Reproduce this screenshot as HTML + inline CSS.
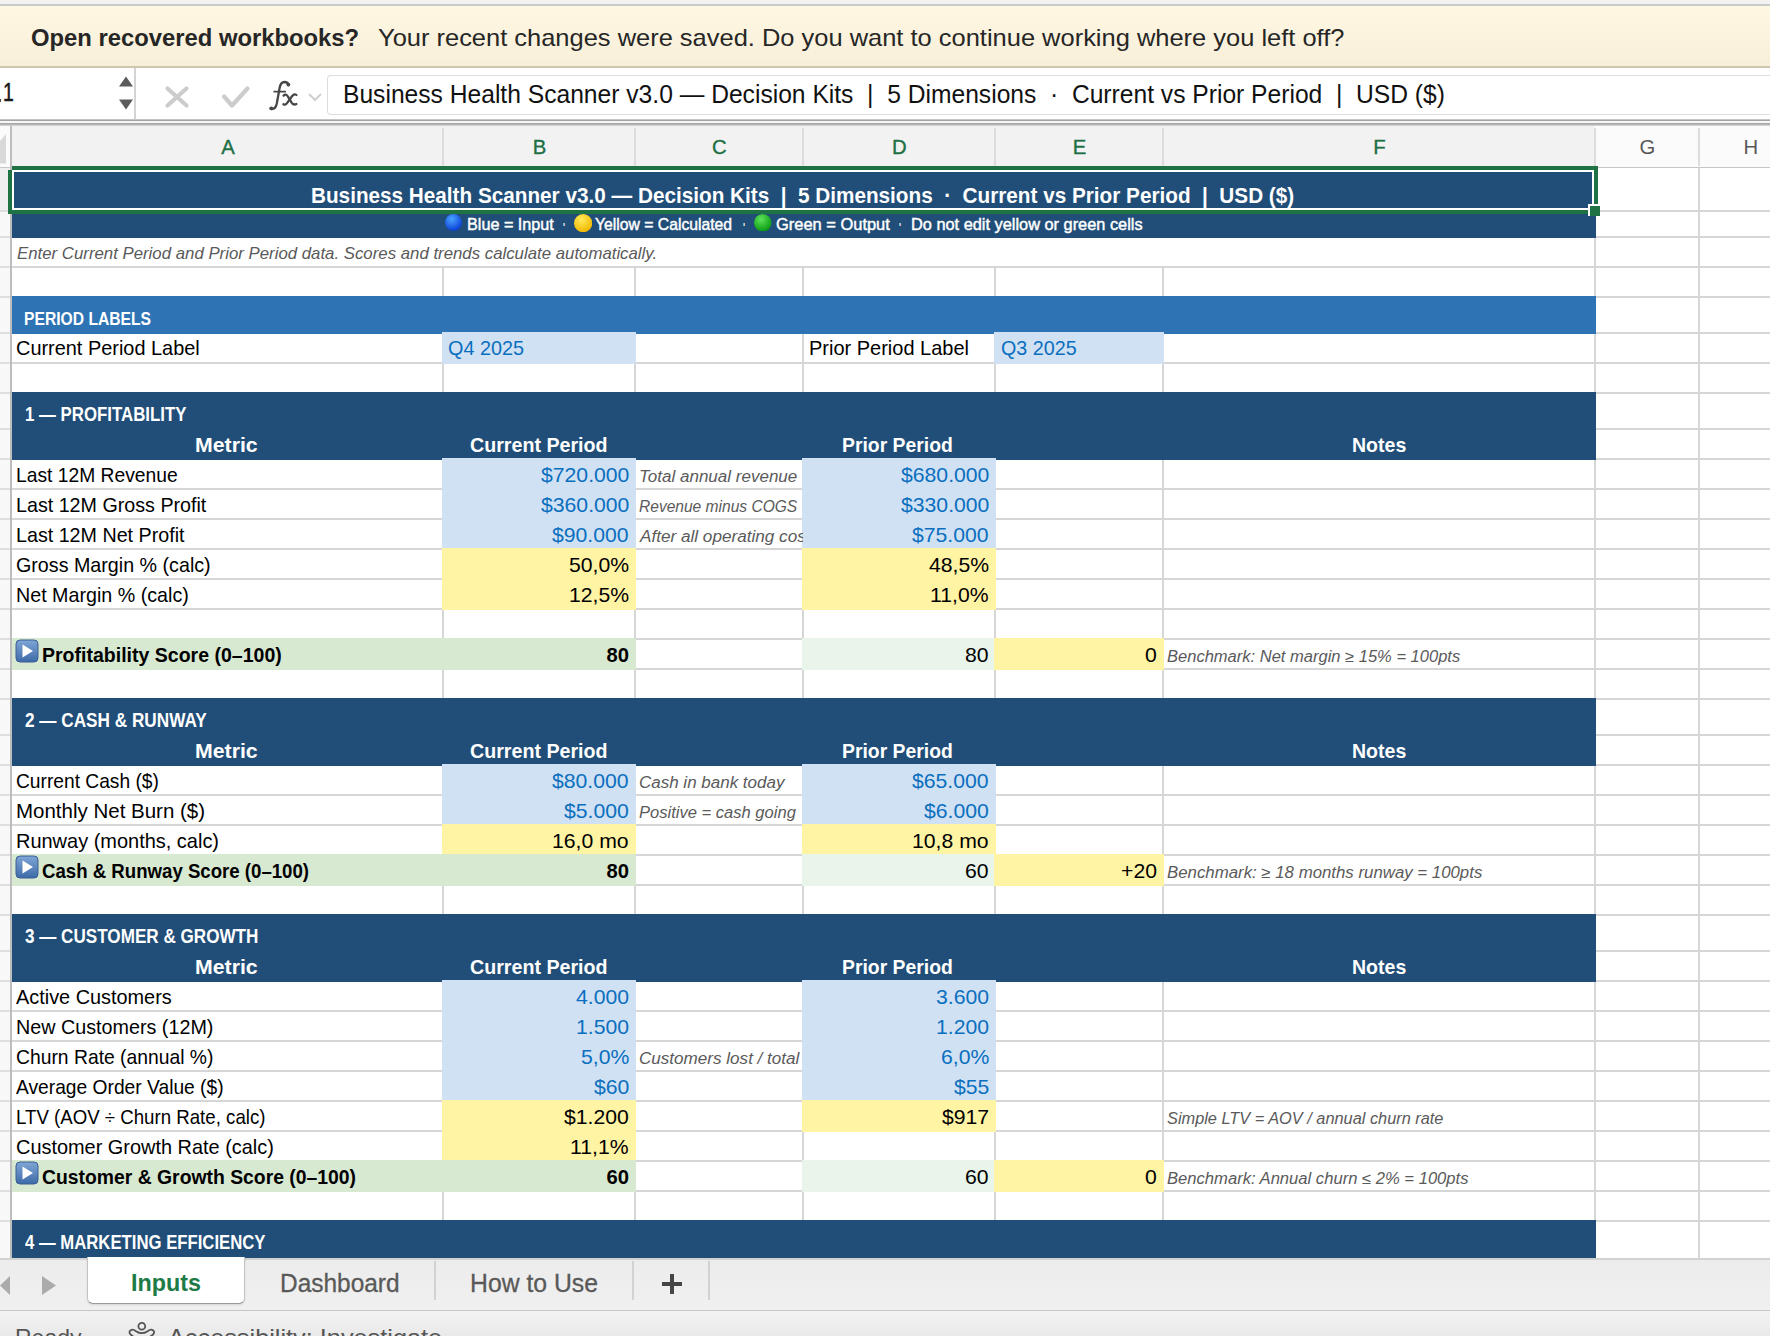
<!DOCTYPE html><html><head><meta charset="utf-8"><style>html,body{margin:0;padding:0;}body{width:1770px;height:1336px;overflow:hidden;position:relative;background:#fff;font-family:"Liberation Sans",sans-serif;}body>div,body>svg,div>div{position:absolute;}.t{white-space:pre;transform-origin:0 0;}svg{position:absolute;}</style></head><body>
<div style="left:0px;top:0px;width:1770px;height:4px;background:#f2f2f2;"></div>
<div style="left:0px;top:4px;width:1770px;height:2px;background:#c9c9c9;"></div>
<div style="left:0px;top:6px;width:1770px;height:60px;background:linear-gradient(#fef7e2,#f8efd9);"></div>
<div style="left:0px;top:66px;width:1770px;height:2px;background:#cfc6b2;"></div>
<div style="left:0px;top:68px;width:1770px;height:51px;background:#ffffff;"></div>
<div class="t" style="left:30.70px;top:25.68px;font-size:24px;line-height:24px;color:#262626;font-weight:700;font-style:normal;transform:scaleX(0.9920);">Open recovered workbooks?</div>
<div class="t" style="left:377.50px;top:25.68px;font-size:24px;line-height:24px;color:#262626;font-weight:400;font-style:normal;transform:scaleX(1.0606);">Your recent changes were saved. Do you want to continue working where you left off?</div>
<div style="left:134px;top:68px;width:2px;height:51px;background:#d4d4d4;"></div>
<div class="t" style="left:2.60px;top:80.21px;font-size:25.5px;line-height:25.5px;color:#1a1a1a;font-weight:400;font-style:normal;transform:scaleX(0.7649);-webkit-text-stroke:0.5px #1a1a1a;">1</div>
<div style="left:0px;top:99px;width:1px;height:3px;background:#444444;"></div>
<svg style="left:117px;top:74px" width="18" height="38" viewBox="0 0 18 38"><path d="M2 12.5 L9 2.5 L16 12.5 Z" fill="#5c5c5c"/><path d="M2 25.5 L9 35.5 L16 25.5 Z" fill="#5c5c5c"/></svg>
<svg style="left:160px;top:80px" width="100" height="34" viewBox="0 0 100 34"><path d="M7.5 8.5 L26.5 25.5 M26.5 8.5 L7.5 25.5" stroke="#cccccc" stroke-width="4.2" stroke-linecap="round"/><path d="M64 16.5 L72 25.5 L87.5 8.5" stroke="#cccccc" stroke-width="4.2" fill="none" stroke-linecap="round" stroke-linejoin="round"/></svg>
<svg style="left:260px;top:75px" width="45" height="40" viewBox="260 75 45 40"><g fill="none" stroke="#474747" stroke-width="2.3" stroke-linecap="round"><path d="M288.6 85 Q288 82 284.5 82 Q280.6 82.2 279.6 88 L276.8 103.5 Q275.6 109.2 271.6 109"/><path d="M274.2 91.6 L285.2 91.6" stroke-width="1.9"/><path d="M283.6 95.6 Q285.8 93.4 287.8 96.4 L291.6 102.6 Q293.6 105.6 296.4 104"/><path d="M296.4 95 Q294.4 93.2 292.2 96 L287.6 102.4 Q285.4 105.6 283.4 104.2"/></g><circle cx="288.3" cy="84.6" r="1.9" fill="#474747"/><circle cx="271.2" cy="108.3" r="1.9" fill="#474747"/></svg>
<svg style="left:306px;top:90px" width="18" height="14" viewBox="0 0 18 14"><path d="M3 4 L9 10 L15 4" stroke="#cfcfcf" stroke-width="2" fill="none"/></svg>
<div style="left:327px;top:75px;width:1443px;height:40px;background:#ffffff;box-sizing:border-box;border:1px solid #dedede;border-right:none;border-radius:4px 0 0 4px;"></div>
<div class="t" style="left:343.40px;top:81.81px;font-size:25.5px;line-height:25.5px;color:#111111;font-weight:400;font-style:normal;transform:scaleX(0.9655);">Business Health Scanner v3.0 — Decision Kits  |  5 Dimensions  ·  Current vs Prior Period  |  USD ($)</div>
<div style="left:0px;top:119px;width:1770px;height:1px;background:#c4c4c4;"></div>
<div style="left:0px;top:120px;width:1770px;height:1px;background:#a3a3a3;"></div>
<div style="left:0px;top:121px;width:1770px;height:2px;background:#f7f7f7;"></div>
<div style="left:0px;top:123px;width:1770px;height:1px;background:#a6a6a6;"></div>
<div style="left:0px;top:124px;width:1770px;height:1px;background:#b6b6b6;"></div>
<div style="left:0px;top:125px;width:1770px;height:1px;background:#d2d2d2;"></div>
<div style="left:0px;top:126px;width:1770px;height:42px;background:#fbfbfb;"></div>
<div style="left:12px;top:126px;width:1583px;height:40px;background:#f2f2f2;"></div>
<div style="left:0px;top:167px;width:1770px;height:2px;background:#c6c6c6;"></div>
<div style="left:442px;top:128px;width:2px;height:38px;background:#dcdcdc;"></div>
<div style="left:634px;top:128px;width:2px;height:38px;background:#dcdcdc;"></div>
<div style="left:802px;top:128px;width:2px;height:38px;background:#dcdcdc;"></div>
<div style="left:994px;top:128px;width:2px;height:38px;background:#dcdcdc;"></div>
<div style="left:1162px;top:128px;width:2px;height:38px;background:#dcdcdc;"></div>
<div style="left:1594px;top:128px;width:2px;height:38px;background:#dcdcdc;"></div>
<div style="left:1698px;top:128px;width:2px;height:38px;background:#dcdcdc;"></div>
<div style="left:10px;top:126px;width:2px;height:42px;background:#bdbdbd;"></div>
<svg style="left:0px;top:134px" width="8" height="30" viewBox="0 0 8 30"><path d="M0 29.6 L6 29.6 L6 0 L0 7 Z" fill="#d9d9d9"/></svg>
<div class="t" style="left:221.25px;top:136.52px;font-size:20.3px;line-height:20.3px;color:#1d7044;font-weight:400;font-style:normal;transform:scaleX(1.0000);-webkit-text-stroke:0.35px #1d7044;">A</div>
<div class="t" style="left:532.75px;top:136.52px;font-size:20.3px;line-height:20.3px;color:#1d7044;font-weight:400;font-style:normal;transform:scaleX(1.0000);-webkit-text-stroke:0.35px #1d7044;">B</div>
<div class="t" style="left:712.12px;top:136.52px;font-size:20.3px;line-height:20.3px;color:#1d7044;font-weight:400;font-style:normal;transform:scaleX(1.0000);-webkit-text-stroke:0.35px #1d7044;">C</div>
<div class="t" style="left:892.12px;top:136.52px;font-size:20.3px;line-height:20.3px;color:#1d7044;font-weight:400;font-style:normal;transform:scaleX(1.0000);-webkit-text-stroke:0.35px #1d7044;">D</div>
<div class="t" style="left:1072.75px;top:136.52px;font-size:20.3px;line-height:20.3px;color:#1d7044;font-weight:400;font-style:normal;transform:scaleX(1.0000);-webkit-text-stroke:0.35px #1d7044;">E</div>
<div class="t" style="left:1373.25px;top:136.52px;font-size:20.3px;line-height:20.3px;color:#1d7044;font-weight:400;font-style:normal;transform:scaleX(1.0000);-webkit-text-stroke:0.35px #1d7044;">F</div>
<div class="t" style="left:1639.62px;top:136.52px;font-size:20.3px;line-height:20.3px;color:#595959;font-weight:400;font-style:normal;transform:scaleX(1.0000);">G</div>
<div class="t" style="left:1743.62px;top:136.52px;font-size:20.3px;line-height:20.3px;color:#595959;font-weight:400;font-style:normal;transform:scaleX(1.0000);">H</div>
<div style="left:0px;top:168px;width:10px;height:1090px;background:#f8f8f8;"></div>
<div style="left:0px;top:168px;width:10px;height:43px;background:#efefef;"></div>
<div style="left:0px;top:210px;width:10px;height:2px;background:#dedede;"></div>
<div style="left:0px;top:236px;width:10px;height:2px;background:#dedede;"></div>
<div style="left:0px;top:266px;width:10px;height:2px;background:#dedede;"></div>
<div style="left:0px;top:296px;width:10px;height:2px;background:#dedede;"></div>
<div style="left:0px;top:332px;width:10px;height:2px;background:#dedede;"></div>
<div style="left:0px;top:362px;width:10px;height:2px;background:#dedede;"></div>
<div style="left:0px;top:392px;width:10px;height:2px;background:#dedede;"></div>
<div style="left:0px;top:428px;width:10px;height:2px;background:#dedede;"></div>
<div style="left:0px;top:458px;width:10px;height:2px;background:#dedede;"></div>
<div style="left:0px;top:488px;width:10px;height:2px;background:#dedede;"></div>
<div style="left:0px;top:518px;width:10px;height:2px;background:#dedede;"></div>
<div style="left:0px;top:548px;width:10px;height:2px;background:#dedede;"></div>
<div style="left:0px;top:578px;width:10px;height:2px;background:#dedede;"></div>
<div style="left:0px;top:608px;width:10px;height:2px;background:#dedede;"></div>
<div style="left:0px;top:638px;width:10px;height:2px;background:#dedede;"></div>
<div style="left:0px;top:668px;width:10px;height:2px;background:#dedede;"></div>
<div style="left:0px;top:698px;width:10px;height:2px;background:#dedede;"></div>
<div style="left:0px;top:734px;width:10px;height:2px;background:#dedede;"></div>
<div style="left:0px;top:764px;width:10px;height:2px;background:#dedede;"></div>
<div style="left:0px;top:794px;width:10px;height:2px;background:#dedede;"></div>
<div style="left:0px;top:824px;width:10px;height:2px;background:#dedede;"></div>
<div style="left:0px;top:854px;width:10px;height:2px;background:#dedede;"></div>
<div style="left:0px;top:884px;width:10px;height:2px;background:#dedede;"></div>
<div style="left:0px;top:914px;width:10px;height:2px;background:#dedede;"></div>
<div style="left:0px;top:950px;width:10px;height:2px;background:#dedede;"></div>
<div style="left:0px;top:980px;width:10px;height:2px;background:#dedede;"></div>
<div style="left:0px;top:1010px;width:10px;height:2px;background:#dedede;"></div>
<div style="left:0px;top:1040px;width:10px;height:2px;background:#dedede;"></div>
<div style="left:0px;top:1070px;width:10px;height:2px;background:#dedede;"></div>
<div style="left:0px;top:1100px;width:10px;height:2px;background:#dedede;"></div>
<div style="left:0px;top:1130px;width:10px;height:2px;background:#dedede;"></div>
<div style="left:0px;top:1160px;width:10px;height:2px;background:#dedede;"></div>
<div style="left:0px;top:1190px;width:10px;height:2px;background:#dedede;"></div>
<div style="left:0px;top:1220px;width:10px;height:2px;background:#dedede;"></div>
<div style="left:10px;top:168px;width:2px;height:1090px;background:#bdbdbd;"></div>
<div style="left:12px;top:168px;width:1758px;height:1090px;background:#ffffff;"></div>
<div style="left:442px;top:168px;width:2px;height:1090px;background:#d6d6d6;"></div>
<div style="left:634px;top:168px;width:2px;height:1090px;background:#d6d6d6;"></div>
<div style="left:802px;top:168px;width:2px;height:1090px;background:#d6d6d6;"></div>
<div style="left:994px;top:168px;width:2px;height:1090px;background:#d6d6d6;"></div>
<div style="left:1162px;top:168px;width:2px;height:1090px;background:#d6d6d6;"></div>
<div style="left:1594px;top:168px;width:2px;height:1090px;background:#d6d6d6;"></div>
<div style="left:1698px;top:168px;width:2px;height:1090px;background:#d6d6d6;"></div>
<div style="left:12px;top:210px;width:1758px;height:2px;background:#d6d6d6;"></div>
<div style="left:12px;top:236px;width:1758px;height:2px;background:#d6d6d6;"></div>
<div style="left:12px;top:266px;width:1758px;height:2px;background:#d6d6d6;"></div>
<div style="left:12px;top:296px;width:1758px;height:2px;background:#d6d6d6;"></div>
<div style="left:12px;top:332px;width:1758px;height:2px;background:#d6d6d6;"></div>
<div style="left:12px;top:362px;width:1758px;height:2px;background:#d6d6d6;"></div>
<div style="left:12px;top:392px;width:1758px;height:2px;background:#d6d6d6;"></div>
<div style="left:12px;top:428px;width:1758px;height:2px;background:#d6d6d6;"></div>
<div style="left:12px;top:458px;width:1758px;height:2px;background:#d6d6d6;"></div>
<div style="left:12px;top:488px;width:1758px;height:2px;background:#d6d6d6;"></div>
<div style="left:12px;top:518px;width:1758px;height:2px;background:#d6d6d6;"></div>
<div style="left:12px;top:548px;width:1758px;height:2px;background:#d6d6d6;"></div>
<div style="left:12px;top:578px;width:1758px;height:2px;background:#d6d6d6;"></div>
<div style="left:12px;top:608px;width:1758px;height:2px;background:#d6d6d6;"></div>
<div style="left:12px;top:638px;width:1758px;height:2px;background:#d6d6d6;"></div>
<div style="left:12px;top:668px;width:1758px;height:2px;background:#d6d6d6;"></div>
<div style="left:12px;top:698px;width:1758px;height:2px;background:#d6d6d6;"></div>
<div style="left:12px;top:734px;width:1758px;height:2px;background:#d6d6d6;"></div>
<div style="left:12px;top:764px;width:1758px;height:2px;background:#d6d6d6;"></div>
<div style="left:12px;top:794px;width:1758px;height:2px;background:#d6d6d6;"></div>
<div style="left:12px;top:824px;width:1758px;height:2px;background:#d6d6d6;"></div>
<div style="left:12px;top:854px;width:1758px;height:2px;background:#d6d6d6;"></div>
<div style="left:12px;top:884px;width:1758px;height:2px;background:#d6d6d6;"></div>
<div style="left:12px;top:914px;width:1758px;height:2px;background:#d6d6d6;"></div>
<div style="left:12px;top:950px;width:1758px;height:2px;background:#d6d6d6;"></div>
<div style="left:12px;top:980px;width:1758px;height:2px;background:#d6d6d6;"></div>
<div style="left:12px;top:1010px;width:1758px;height:2px;background:#d6d6d6;"></div>
<div style="left:12px;top:1040px;width:1758px;height:2px;background:#d6d6d6;"></div>
<div style="left:12px;top:1070px;width:1758px;height:2px;background:#d6d6d6;"></div>
<div style="left:12px;top:1100px;width:1758px;height:2px;background:#d6d6d6;"></div>
<div style="left:12px;top:1130px;width:1758px;height:2px;background:#d6d6d6;"></div>
<div style="left:12px;top:1160px;width:1758px;height:2px;background:#d6d6d6;"></div>
<div style="left:12px;top:1190px;width:1758px;height:2px;background:#d6d6d6;"></div>
<div style="left:12px;top:1220px;width:1758px;height:2px;background:#d6d6d6;"></div>
<div style="left:12px;top:296px;width:1584px;height:38px;background:#2e74b5;"></div>
<div style="left:442px;top:332px;width:194px;height:32px;background:#d0e1f3;"></div>
<div style="left:994px;top:332px;width:170px;height:32px;background:#d0e1f3;"></div>
<div style="left:12px;top:392px;width:1584px;height:68px;background:#214e78;"></div>
<div style="left:12px;top:698px;width:1584px;height:68px;background:#214e78;"></div>
<div style="left:12px;top:914px;width:1584px;height:68px;background:#214e78;"></div>
<div style="left:12px;top:1220px;width:1584px;height:38px;background:#214e78;"></div>
<div style="left:12px;top:210px;width:1584px;height:28px;background:#214e78;"></div>
<div style="left:442px;top:458px;width:194px;height:92px;background:#d0e1f3;"></div>
<div style="left:802px;top:458px;width:194px;height:92px;background:#d0e1f3;"></div>
<div style="left:442px;top:548px;width:194px;height:62px;background:#fff3a4;"></div>
<div style="left:802px;top:548px;width:194px;height:62px;background:#fff3a4;"></div>
<div style="left:442px;top:764px;width:194px;height:62px;background:#d0e1f3;"></div>
<div style="left:802px;top:764px;width:194px;height:62px;background:#d0e1f3;"></div>
<div style="left:442px;top:824px;width:194px;height:32px;background:#fff3a4;"></div>
<div style="left:802px;top:824px;width:194px;height:32px;background:#fff3a4;"></div>
<div style="left:442px;top:980px;width:194px;height:122px;background:#d0e1f3;"></div>
<div style="left:802px;top:980px;width:194px;height:122px;background:#d0e1f3;"></div>
<div style="left:442px;top:1100px;width:194px;height:32px;background:#fff3a4;"></div>
<div style="left:802px;top:1100px;width:194px;height:32px;background:#fff3a4;"></div>
<div style="left:442px;top:1130px;width:194px;height:32px;background:#fff3a4;"></div>
<div style="left:12px;top:638px;width:624px;height:32px;background:#d8e9d2;"></div>
<div style="left:802px;top:638px;width:194px;height:32px;background:#e9f4ea;"></div>
<div style="left:994px;top:638px;width:170px;height:32px;background:#fff3a4;"></div>
<div style="left:12px;top:854px;width:624px;height:32px;background:#d8e9d2;"></div>
<div style="left:802px;top:854px;width:194px;height:32px;background:#e9f4ea;"></div>
<div style="left:994px;top:854px;width:170px;height:32px;background:#fff3a4;"></div>
<div style="left:12px;top:1160px;width:624px;height:32px;background:#d8e9d2;"></div>
<div style="left:802px;top:1160px;width:194px;height:32px;background:#e9f4ea;"></div>
<div style="left:994px;top:1160px;width:170px;height:32px;background:#fff3a4;"></div>
<div style="left:13px;top:238px;width:1581px;height:28px;background:#ffffff;"></div>
<div style="left:12px;top:166px;width:1586px;height:4px;background:#1f7244;"></div>
<div style="left:8px;top:170px;width:4px;height:44px;background:#1f7244;"></div>
<div style="left:1594px;top:166px;width:4px;height:48px;background:#1f7244;"></div>
<div style="left:8px;top:210px;width:1590px;height:4px;background:#1f7244;"></div>
<div style="left:12px;top:170px;width:1582px;height:40px;background:#ffffff;"></div>
<div style="left:14px;top:172px;width:1578px;height:36px;background:#214e78;"></div>
<div style="left:1588px;top:204px;width:12px;height:12px;background:#ffffff;"></div>
<div style="left:1590px;top:206px;width:10px;height:10px;background:#1f7244;"></div>
<div class="t" style="left:310.80px;top:185.58px;font-size:21.4px;line-height:21.4px;color:#ffffff;font-weight:700;font-style:normal;transform:scaleX(0.9684);">Business Health Scanner v3.0 — Decision Kits  |  5 Dimensions  ·  Current vs Prior Period  |  USD ($)</div>
<svg style="left:444.8px;top:213.9px" width="16.9" height="16.9" viewBox="0 0 20 20"><defs><radialGradient id="g444" cx="40%" cy="30%" r="70%"><stop offset="0" stop-color="#4aa3ff"/><stop offset="1" stop-color="#0a3fd6"/></radialGradient></defs><circle cx="10" cy="10" r="10" fill="url(#g444)"/></svg>
<svg style="left:573.7px;top:213.9px" width="18.3" height="18.3" viewBox="0 0 20 20"><defs><radialGradient id="g573" cx="40%" cy="30%" r="70%"><stop offset="0" stop-color="#ffe95a"/><stop offset="1" stop-color="#f0b800"/></radialGradient></defs><circle cx="10" cy="10" r="10" fill="url(#g573)"/></svg>
<svg style="left:754.0px;top:213.9px" width="17.5" height="17.5" viewBox="0 0 20 20"><defs><radialGradient id="g754" cx="40%" cy="30%" r="70%"><stop offset="0" stop-color="#5de35a"/><stop offset="1" stop-color="#0a9a12"/></radialGradient></defs><circle cx="10" cy="10" r="10" fill="url(#g754)"/></svg>
<div class="t" style="left:466.50px;top:215.51px;font-size:17px;line-height:17px;color:#ffffff;font-weight:400;font-style:normal;transform:scaleX(0.9523);-webkit-text-stroke:0.45px #ffffff;">Blue = Input</div>
<div class="t" style="left:562.50px;top:213.97px;font-size:20px;line-height:20px;color:#ffffff;font-weight:700;font-style:normal;transform:scaleX(0.3704);">·</div>
<div class="t" style="left:595.30px;top:215.51px;font-size:17px;line-height:17px;color:#ffffff;font-weight:400;font-style:normal;transform:scaleX(0.9248);-webkit-text-stroke:0.45px #ffffff;">Yellow = Calculated</div>
<div class="t" style="left:742.70px;top:213.97px;font-size:20px;line-height:20px;color:#ffffff;font-weight:700;font-style:normal;transform:scaleX(0.3704);">·</div>
<div class="t" style="left:775.50px;top:215.51px;font-size:17px;line-height:17px;color:#ffffff;font-weight:400;font-style:normal;transform:scaleX(0.9673);-webkit-text-stroke:0.45px #ffffff;">Green = Output</div>
<div class="t" style="left:899.30px;top:213.97px;font-size:20px;line-height:20px;color:#ffffff;font-weight:700;font-style:normal;transform:scaleX(0.3704);">·</div>
<div class="t" style="left:910.60px;top:215.51px;font-size:17px;line-height:17px;color:#ffffff;font-weight:400;font-style:normal;transform:scaleX(0.9610);-webkit-text-stroke:0.45px #ffffff;">Do not edit yellow or green cells</div>
<div class="t" style="left:16.80px;top:246.35px;font-size:16.6px;line-height:16.6px;color:#595959;font-weight:400;font-style:italic;transform:scaleX(1.0122);">Enter Current Period and Prior Period data. Scores and trends calculate automatically.</div>
<div class="t" style="left:24.00px;top:310.24px;font-size:18.5px;line-height:18.5px;color:#ffffff;font-weight:700;font-style:normal;transform:scaleX(0.8467);">PERIOD LABELS</div>
<div class="t" style="left:16.30px;top:338.20px;font-size:20.2px;line-height:20.2px;color:#000000;font-weight:400;font-style:normal;transform:scaleX(0.9861);">Current Period Label</div>
<div class="t" style="left:448.30px;top:338.40px;font-size:20.2px;line-height:20.2px;color:#0b6fbf;font-weight:400;font-style:normal;transform:scaleX(0.9819);">Q4 2025</div>
<div class="t" style="left:808.50px;top:338.20px;font-size:20.2px;line-height:20.2px;color:#000000;font-weight:400;font-style:normal;transform:scaleX(0.9898);">Prior Period Label</div>
<div class="t" style="left:1000.80px;top:338.40px;font-size:20.2px;line-height:20.2px;color:#0b6fbf;font-weight:400;font-style:normal;transform:scaleX(0.9768);">Q3 2025</div>
<div class="t" style="left:24.50px;top:405.15px;font-size:19.9px;line-height:19.9px;color:#ffffff;font-weight:700;font-style:normal;transform:scaleX(0.8461);">1 — PROFITABILITY</div>
<div class="t" style="left:194.50px;top:434.22px;font-size:21px;line-height:21px;color:#ffffff;font-weight:700;font-style:normal;transform:scaleX(1.0138);">Metric</div>
<div class="t" style="left:470.00px;top:434.22px;font-size:21px;line-height:21px;color:#ffffff;font-weight:700;font-style:normal;transform:scaleX(0.9354);">Current Period</div>
<div class="t" style="left:842.40px;top:434.22px;font-size:21px;line-height:21px;color:#ffffff;font-weight:700;font-style:normal;transform:scaleX(0.9222);">Prior Period</div>
<div class="t" style="left:1351.91px;top:434.22px;font-size:21px;line-height:21px;color:#ffffff;font-weight:700;font-style:normal;transform:scaleX(0.9300);">Notes</div>
<div class="t" style="left:24.50px;top:711.15px;font-size:19.9px;line-height:19.9px;color:#ffffff;font-weight:700;font-style:normal;transform:scaleX(0.8637);">2 — CASH &amp; RUNWAY</div>
<div class="t" style="left:194.50px;top:740.22px;font-size:21px;line-height:21px;color:#ffffff;font-weight:700;font-style:normal;transform:scaleX(1.0138);">Metric</div>
<div class="t" style="left:470.00px;top:740.22px;font-size:21px;line-height:21px;color:#ffffff;font-weight:700;font-style:normal;transform:scaleX(0.9354);">Current Period</div>
<div class="t" style="left:842.40px;top:740.22px;font-size:21px;line-height:21px;color:#ffffff;font-weight:700;font-style:normal;transform:scaleX(0.9222);">Prior Period</div>
<div class="t" style="left:1351.91px;top:740.22px;font-size:21px;line-height:21px;color:#ffffff;font-weight:700;font-style:normal;transform:scaleX(0.9300);">Notes</div>
<div class="t" style="left:24.50px;top:927.15px;font-size:19.9px;line-height:19.9px;color:#ffffff;font-weight:700;font-style:normal;transform:scaleX(0.8597);">3 — CUSTOMER &amp; GROWTH</div>
<div class="t" style="left:194.50px;top:956.22px;font-size:21px;line-height:21px;color:#ffffff;font-weight:700;font-style:normal;transform:scaleX(1.0138);">Metric</div>
<div class="t" style="left:470.00px;top:956.22px;font-size:21px;line-height:21px;color:#ffffff;font-weight:700;font-style:normal;transform:scaleX(0.9354);">Current Period</div>
<div class="t" style="left:842.40px;top:956.22px;font-size:21px;line-height:21px;color:#ffffff;font-weight:700;font-style:normal;transform:scaleX(0.9222);">Prior Period</div>
<div class="t" style="left:1351.91px;top:956.22px;font-size:21px;line-height:21px;color:#ffffff;font-weight:700;font-style:normal;transform:scaleX(0.9300);">Notes</div>
<div class="t" style="left:24.50px;top:1233.15px;font-size:19.9px;line-height:19.9px;color:#ffffff;font-weight:700;font-style:normal;transform:scaleX(0.8402);">4 — MARKETING EFFICIENCY</div>
<div class="t" style="left:16.30px;top:464.70px;font-size:20.2px;line-height:20.2px;color:#000000;font-weight:400;font-style:normal;transform:scaleX(0.9540);">Last 12M Revenue</div>
<div class="t" style="left:540.54px;top:464.70px;font-size:20.2px;line-height:20.2px;color:#0b6fbf;font-weight:400;font-style:normal;transform:scaleX(1.0500);">$720.000</div>
<div style="left:635px;top:460px;width:168px;height:30px;overflow:hidden"><div class="t" style="left:4.30px;top:8.93px;font-size:15.8px;line-height:15.8px;color:#5a5a5a;font-weight:400;font-style:italic;transform:scaleX(1.0769);">Total annual revenue</div></div>
<div class="t" style="left:900.54px;top:464.70px;font-size:20.2px;line-height:20.2px;color:#0b6fbf;font-weight:400;font-style:normal;transform:scaleX(1.0500);">$680.000</div>
<div class="t" style="left:16.30px;top:494.70px;font-size:20.2px;line-height:20.2px;color:#000000;font-weight:400;font-style:normal;transform:scaleX(0.9750);">Last 12M Gross Profit</div>
<div class="t" style="left:540.54px;top:494.70px;font-size:20.2px;line-height:20.2px;color:#0b6fbf;font-weight:400;font-style:normal;transform:scaleX(1.0500);">$360.000</div>
<div style="left:635px;top:490px;width:168px;height:30px;overflow:hidden"><div class="t" style="left:4.30px;top:8.93px;font-size:15.8px;line-height:15.8px;color:#5a5a5a;font-weight:400;font-style:italic;transform:scaleX(0.9848);">Revenue minus COGS</div></div>
<div class="t" style="left:900.54px;top:494.70px;font-size:20.2px;line-height:20.2px;color:#0b6fbf;font-weight:400;font-style:normal;transform:scaleX(1.0500);">$330.000</div>
<div class="t" style="left:16.30px;top:524.70px;font-size:20.2px;line-height:20.2px;color:#000000;font-weight:400;font-style:normal;transform:scaleX(0.9750);">Last 12M Net Profit</div>
<div class="t" style="left:552.35px;top:524.70px;font-size:20.2px;line-height:20.2px;color:#0b6fbf;font-weight:400;font-style:normal;transform:scaleX(1.0500);">$90.000</div>
<div style="left:635px;top:520px;width:168px;height:30px;overflow:hidden"><div class="t" style="left:5.38px;top:8.93px;font-size:15.8px;line-height:15.8px;color:#5a5a5a;font-weight:400;font-style:italic;transform:scaleX(1.0850);">After all operating costs</div></div>
<div class="t" style="left:912.35px;top:524.70px;font-size:20.2px;line-height:20.2px;color:#0b6fbf;font-weight:400;font-style:normal;transform:scaleX(1.0500);">$75.000</div>
<div class="t" style="left:16.30px;top:554.70px;font-size:20.2px;line-height:20.2px;color:#000000;font-weight:400;font-style:normal;transform:scaleX(0.9750);">Gross Margin % (calc)</div>
<div class="t" style="left:568.89px;top:554.70px;font-size:20.2px;line-height:20.2px;color:#000000;font-weight:400;font-style:normal;transform:scaleX(1.0500);">50,0%</div>
<div class="t" style="left:928.89px;top:554.70px;font-size:20.2px;line-height:20.2px;color:#000000;font-weight:400;font-style:normal;transform:scaleX(1.0500);">48,5%</div>
<div class="t" style="left:16.30px;top:584.70px;font-size:20.2px;line-height:20.2px;color:#000000;font-weight:400;font-style:normal;transform:scaleX(0.9750);">Net Margin % (calc)</div>
<div class="t" style="left:568.89px;top:584.70px;font-size:20.2px;line-height:20.2px;color:#000000;font-weight:400;font-style:normal;transform:scaleX(1.0500);">12,5%</div>
<div class="t" style="left:930.46px;top:584.70px;font-size:20.2px;line-height:20.2px;color:#000000;font-weight:400;font-style:normal;transform:scaleX(1.0500);">11,0%</div>
<svg style="left:15px;top:639px" width="24" height="24" viewBox="0 0 24 24"><defs><linearGradient id="pg16" x1="0" y1="0" x2="0" y2="1"><stop offset="0" stop-color="#7fa6d6"/><stop offset="1" stop-color="#3d6aa8"/></linearGradient></defs><rect x="1" y="1" width="22" height="22" rx="4" fill="url(#pg16)" stroke="#3a5f93" stroke-width="1"/><path d="M7.5 5.5 L18 12 L7.5 18.5 Z" fill="#ffffff"/></svg>
<div class="t" style="left:42.20px;top:644.70px;font-size:20.2px;line-height:20.2px;color:#000000;font-weight:700;font-style:normal;transform:scaleX(0.9669);">Profitability Score (0–100)</div>
<div class="t" style="left:606.50px;top:644.70px;font-size:20.2px;line-height:20.2px;color:#000000;font-weight:700;font-style:normal;transform:scaleX(1.0000);">80</div>
<div class="t" style="left:965.38px;top:644.70px;font-size:20.2px;line-height:20.2px;color:#000000;font-weight:400;font-style:normal;transform:scaleX(1.0500);">80</div>
<div class="t" style="left:1145.19px;top:644.70px;font-size:20.2px;line-height:20.2px;color:#000000;font-weight:400;font-style:normal;transform:scaleX(1.0500);">0</div>
<div class="t" style="left:1167.30px;top:648.93px;font-size:15.8px;line-height:15.8px;color:#5a5a5a;font-weight:400;font-style:italic;transform:scaleX(1.0456);">Benchmark: Net margin ≥ 15% = 100pts</div>
<div class="t" style="left:16.30px;top:770.70px;font-size:20.2px;line-height:20.2px;color:#000000;font-weight:400;font-style:normal;transform:scaleX(0.9508);">Current Cash ($)</div>
<div class="t" style="left:552.35px;top:770.70px;font-size:20.2px;line-height:20.2px;color:#0b6fbf;font-weight:400;font-style:normal;transform:scaleX(1.0500);">$80.000</div>
<div style="left:635px;top:766px;width:168px;height:30px;overflow:hidden"><div class="t" style="left:4.30px;top:8.93px;font-size:15.8px;line-height:15.8px;color:#5a5a5a;font-weight:400;font-style:italic;transform:scaleX(1.0750);">Cash in bank today</div></div>
<div class="t" style="left:912.35px;top:770.70px;font-size:20.2px;line-height:20.2px;color:#0b6fbf;font-weight:400;font-style:normal;transform:scaleX(1.0500);">$65.000</div>
<div class="t" style="left:16.30px;top:800.70px;font-size:20.2px;line-height:20.2px;color:#000000;font-weight:400;font-style:normal;transform:scaleX(1.0153);">Monthly Net Burn ($)</div>
<div class="t" style="left:564.16px;top:800.70px;font-size:20.2px;line-height:20.2px;color:#0b6fbf;font-weight:400;font-style:normal;transform:scaleX(1.0500);">$5.000</div>
<div style="left:635px;top:796px;width:168px;height:30px;overflow:hidden"><div class="t" style="left:4.30px;top:8.93px;font-size:15.8px;line-height:15.8px;color:#5a5a5a;font-weight:400;font-style:italic;transform:scaleX(1.0477);">Positive = cash going</div></div>
<div class="t" style="left:924.16px;top:800.70px;font-size:20.2px;line-height:20.2px;color:#0b6fbf;font-weight:400;font-style:normal;transform:scaleX(1.0500);">$6.000</div>
<div class="t" style="left:16.30px;top:830.70px;font-size:20.2px;line-height:20.2px;color:#000000;font-weight:400;font-style:normal;transform:scaleX(0.9888);">Runway (months, calc)</div>
<div class="t" style="left:552.35px;top:830.70px;font-size:20.2px;line-height:20.2px;color:#000000;font-weight:400;font-style:normal;transform:scaleX(1.0500);">16,0 mo</div>
<div class="t" style="left:912.35px;top:830.70px;font-size:20.2px;line-height:20.2px;color:#000000;font-weight:400;font-style:normal;transform:scaleX(1.0500);">10,8 mo</div>
<svg style="left:15px;top:855px" width="24" height="24" viewBox="0 0 24 24"><defs><linearGradient id="pg23" x1="0" y1="0" x2="0" y2="1"><stop offset="0" stop-color="#7fa6d6"/><stop offset="1" stop-color="#3d6aa8"/></linearGradient></defs><rect x="1" y="1" width="22" height="22" rx="4" fill="url(#pg23)" stroke="#3a5f93" stroke-width="1"/><path d="M7.5 5.5 L18 12 L7.5 18.5 Z" fill="#ffffff"/></svg>
<div class="t" style="left:42.20px;top:860.70px;font-size:20.2px;line-height:20.2px;color:#000000;font-weight:700;font-style:normal;transform:scaleX(0.9225);">Cash &amp; Runway Score (0–100)</div>
<div class="t" style="left:606.50px;top:860.70px;font-size:20.2px;line-height:20.2px;color:#000000;font-weight:700;font-style:normal;transform:scaleX(1.0000);">80</div>
<div class="t" style="left:965.38px;top:860.70px;font-size:20.2px;line-height:20.2px;color:#000000;font-weight:400;font-style:normal;transform:scaleX(1.0500);">60</div>
<div class="t" style="left:1121.04px;top:860.70px;font-size:20.2px;line-height:20.2px;color:#000000;font-weight:400;font-style:normal;transform:scaleX(1.0500);">+20</div>
<div class="t" style="left:1167.30px;top:864.93px;font-size:15.8px;line-height:15.8px;color:#5a5a5a;font-weight:400;font-style:italic;transform:scaleX(1.0643);">Benchmark: ≥ 18 months runway = 100pts</div>
<div class="t" style="left:16.30px;top:986.70px;font-size:20.2px;line-height:20.2px;color:#000000;font-weight:400;font-style:normal;transform:scaleX(0.9845);">Active Customers</div>
<div class="t" style="left:575.98px;top:986.70px;font-size:20.2px;line-height:20.2px;color:#0b6fbf;font-weight:400;font-style:normal;transform:scaleX(1.0500);">4.000</div>
<div class="t" style="left:935.98px;top:986.70px;font-size:20.2px;line-height:20.2px;color:#0b6fbf;font-weight:400;font-style:normal;transform:scaleX(1.0500);">3.600</div>
<div class="t" style="left:16.30px;top:1016.70px;font-size:20.2px;line-height:20.2px;color:#000000;font-weight:400;font-style:normal;transform:scaleX(0.9777);">New Customers (12M)</div>
<div class="t" style="left:575.98px;top:1016.70px;font-size:20.2px;line-height:20.2px;color:#0b6fbf;font-weight:400;font-style:normal;transform:scaleX(1.0500);">1.500</div>
<div class="t" style="left:935.98px;top:1016.70px;font-size:20.2px;line-height:20.2px;color:#0b6fbf;font-weight:400;font-style:normal;transform:scaleX(1.0500);">1.200</div>
<div class="t" style="left:16.30px;top:1046.70px;font-size:20.2px;line-height:20.2px;color:#000000;font-weight:400;font-style:normal;transform:scaleX(0.9564);">Churn Rate (annual %)</div>
<div class="t" style="left:580.70px;top:1046.70px;font-size:20.2px;line-height:20.2px;color:#0b6fbf;font-weight:400;font-style:normal;transform:scaleX(1.0500);">5,0%</div>
<div style="left:635px;top:1042px;width:168px;height:30px;overflow:hidden"><div class="t" style="left:4.30px;top:8.93px;font-size:15.8px;line-height:15.8px;color:#5a5a5a;font-weight:400;font-style:italic;transform:scaleX(1.0810);">Customers lost / total customers</div></div>
<div class="t" style="left:940.70px;top:1046.70px;font-size:20.2px;line-height:20.2px;color:#0b6fbf;font-weight:400;font-style:normal;transform:scaleX(1.0500);">6,0%</div>
<div class="t" style="left:16.30px;top:1076.70px;font-size:20.2px;line-height:20.2px;color:#000000;font-weight:400;font-style:normal;transform:scaleX(0.9521);">Average Order Value ($)</div>
<div class="t" style="left:593.56px;top:1076.70px;font-size:20.2px;line-height:20.2px;color:#0b6fbf;font-weight:400;font-style:normal;transform:scaleX(1.0500);">$60</div>
<div class="t" style="left:953.56px;top:1076.70px;font-size:20.2px;line-height:20.2px;color:#0b6fbf;font-weight:400;font-style:normal;transform:scaleX(1.0500);">$55</div>
<div class="t" style="left:16.30px;top:1106.70px;font-size:20.2px;line-height:20.2px;color:#000000;font-weight:400;font-style:normal;transform:scaleX(0.9244);">LTV (AOV ÷ Churn Rate, calc)</div>
<div class="t" style="left:564.16px;top:1106.70px;font-size:20.2px;line-height:20.2px;color:#000000;font-weight:400;font-style:normal;transform:scaleX(1.0500);">$1.200</div>
<div class="t" style="left:941.75px;top:1106.70px;font-size:20.2px;line-height:20.2px;color:#000000;font-weight:400;font-style:normal;transform:scaleX(1.0500);">$917</div>
<div class="t" style="left:16.30px;top:1136.70px;font-size:20.2px;line-height:20.2px;color:#000000;font-weight:400;font-style:normal;transform:scaleX(0.9866);">Customer Growth Rate (calc)</div>
<div class="t" style="left:570.46px;top:1136.70px;font-size:20.2px;line-height:20.2px;color:#000000;font-weight:400;font-style:normal;transform:scaleX(1.0500);">11,1%</div>
<div class="t" style="left:1167.30px;top:1110.93px;font-size:15.8px;line-height:15.8px;color:#5a5a5a;font-weight:400;font-style:italic;transform:scaleX(1.0340);">Simple LTV = AOV / annual churn rate</div>
<svg style="left:15px;top:1161px" width="24" height="24" viewBox="0 0 24 24"><defs><linearGradient id="pg33" x1="0" y1="0" x2="0" y2="1"><stop offset="0" stop-color="#7fa6d6"/><stop offset="1" stop-color="#3d6aa8"/></linearGradient></defs><rect x="1" y="1" width="22" height="22" rx="4" fill="url(#pg33)" stroke="#3a5f93" stroke-width="1"/><path d="M7.5 5.5 L18 12 L7.5 18.5 Z" fill="#ffffff"/></svg>
<div class="t" style="left:42.20px;top:1166.70px;font-size:20.2px;line-height:20.2px;color:#000000;font-weight:700;font-style:normal;transform:scaleX(0.9587);">Customer &amp; Growth Score (0–100)</div>
<div class="t" style="left:606.50px;top:1166.70px;font-size:20.2px;line-height:20.2px;color:#000000;font-weight:700;font-style:normal;transform:scaleX(1.0000);">60</div>
<div class="t" style="left:965.38px;top:1166.70px;font-size:20.2px;line-height:20.2px;color:#000000;font-weight:400;font-style:normal;transform:scaleX(1.0500);">60</div>
<div class="t" style="left:1145.19px;top:1166.70px;font-size:20.2px;line-height:20.2px;color:#000000;font-weight:400;font-style:normal;transform:scaleX(1.0500);">0</div>
<div class="t" style="left:1167.30px;top:1170.93px;font-size:15.8px;line-height:15.8px;color:#5a5a5a;font-weight:400;font-style:italic;transform:scaleX(1.0509);">Benchmark: Annual churn ≤ 2% = 100pts</div>
<div style="left:0px;top:1258px;width:1770px;height:53px;background:linear-gradient(#ececec,#f0f0f0);"></div>
<div style="left:0px;top:1258px;width:1770px;height:1.5px;background:#d2d2d2;"></div>
<div style="left:0px;top:1310px;width:1770px;height:1px;background:#c6c6c6;"></div>
<div style="left:0px;top:1311px;width:1770px;height:25px;background:linear-gradient(#f3f3f3,#e9e9e9);"></div>
<div style="left:87px;top:1257px;width:158px;height:47px;box-sizing:border-box;background:#ffffff;border-radius:0 0 6px 6px;border:1px solid #c4c4c4;border-top:none;border-bottom:1.5px solid #9a9a9a;box-shadow:0 1px 2px rgba(0,0,0,0.12);"></div>
<div style="left:434px;top:1261px;width:2px;height:39px;background:#d2d2d2;"></div>
<div style="left:632px;top:1261px;width:2px;height:39px;background:#d2d2d2;"></div>
<div style="left:708px;top:1261px;width:2px;height:39px;background:#d2d2d2;"></div>
<svg style="left:0px;top:1274px" width="60" height="24" viewBox="0 0 60 24"><path d="M10 2 L0 11.5 L10 21 Z" fill="#ababab"/><path d="M42 2 L56 11.5 L42 21 Z" fill="#ababab"/></svg>
<div class="t" style="left:130.80px;top:1270.76px;font-size:24.5px;line-height:24.5px;color:#1e7b45;font-weight:700;font-style:normal;transform:scaleX(0.9524);">Inputs</div>
<div class="t" style="left:280.10px;top:1271.24px;font-size:25px;line-height:25px;color:#595959;font-weight:400;font-style:normal;transform:scaleX(0.9775);-webkit-text-stroke:0.3px #595959;">Dashboard</div>
<div class="t" style="left:470.20px;top:1271.24px;font-size:25px;line-height:25px;color:#595959;font-weight:400;font-style:normal;transform:scaleX(0.9903);-webkit-text-stroke:0.3px #595959;">How to Use</div>
<div style="left:662px;top:1282.2px;width:20px;height:3.599999999999909px;background:#454545;"></div>
<div style="left:670.2px;top:1274px;width:3.599999999999909px;height:20px;background:#454545;"></div>
<div class="t" style="left:15.00px;top:1326.18px;font-size:24px;line-height:24px;color:#555555;font-weight:400;font-style:normal;transform:scaleX(0.9583);">Ready</div>
<svg style="left:124px;top:1318px" width="36" height="18" viewBox="0 0 36 18"><circle cx="17.8" cy="8.2" r="3.4" fill="none" stroke="#555" stroke-width="1.8"/><path d="M6.5 16.5 Q4 13 7.5 11.8 Q9.5 11.2 12 13.2 Q17.8 17.2 23.6 13.2 Q26.1 11.2 28.1 11.8 Q31.6 13 29.1 16.5 L25 19.5 M6.5 16.5 L10.5 19.5" fill="none" stroke="#555" stroke-width="1.8" stroke-linejoin="round"/></svg>
<div class="t" style="left:168.30px;top:1326.18px;font-size:24px;line-height:24px;color:#555555;font-weight:400;font-style:normal;transform:scaleX(1.0538);">Accessibility: Investigate</div>
</body></html>
